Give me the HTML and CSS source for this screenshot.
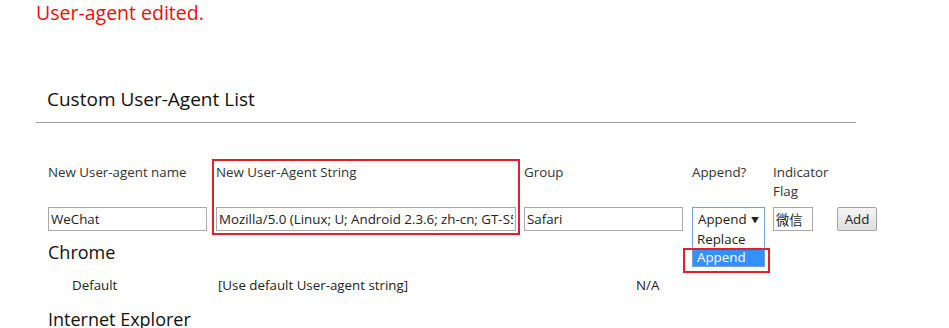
FILE: index.html
```html
<!DOCTYPE html>
<html lang="en">
<head>
  <meta charset="UTF-8">
  <title>User-Agent Switcher Options</title>
  <link rel="stylesheet" href="styles.css">
</head>
<body>
  <!-- status message -->
  <p class="notice">User-agent edited.</p>

  <div class="section">
    <h2 class="section-title">Custom User-Agent List</h2>

    <!-- add form -->
    <div class="add-form">
      <div class="col col-name">
        <label class="col-label">New User-agent name</label>
        <input class="field" type="text" value="WeChat">
      </div>
      <div class="col col-string marked">
        <label class="col-label">New User-Agent String</label>
        <input class="field" type="text" value="Mozilla/5.0 (Linux; U; Android 2.3.6; zh-cn; GT-S5660 Build/GINGERBREAD)">
      </div>
      <div class="col col-group">
        <label class="col-label">Group</label>
        <input class="field" type="text" value="Safari">
      </div>
      <div class="col col-append">
        <label class="col-label">Append?</label>
        <div class="select-box">
          <span>Append</span>
          <span class="arrow">&#9660;</span>
        </div>
        <ul class="dropdown">
          <li>Replace</li>
          <li class="selected">Append</li>
        </ul>
        <span class="callout"></span>
      </div>
      <div class="col col-flag">
        <label class="col-label">Indicator Flag</label>
        <input class="field" type="text" value="微信">
      </div>
      <div class="col col-add">
        <label class="col-label"></label>
        <button class="add-btn">Add</button>
      </div>
    </div>

    <!-- groups -->
    <h3 class="group-title">Chrome</h3>
    <div class="ua-row">
      <span>Default</span>
      <span>[Use default User-agent string]</span>
      <span>N/A</span>
    </div>

    <h3 class="group-title">Internet Explorer</h3>
  </div>
</body>
</html>
```

FILE: styles.css
```css
/* base */
body {
  margin: 0;
  font-family: "Open Sans", "Noto Sans CJK SC", sans-serif;
  font-size: 13.33px;
  color: #222;
  background: #fff;
  overflow: hidden;
}

.notice {
  margin: 0;
  padding-left: 36px;
  font-size: 19.5px;
  line-height: 26px;
  color: #f20d0d;
}

.section {
  padding-left: 36px;
}

.section-title {
  margin: 60px 0 0;
  width: 809px;
  padding: 0 0 9px 11px;
  font-size: 19px;
  font-weight: normal;
  line-height: 27px;
  color: #111;
  border-bottom: 1px solid #999;
}

/* add form */
.add-form {
  display: flex;
  gap: 8px;
  margin: 40px 0 0 12px;
}

.col {
  display: flex;
  flex-direction: column;
  position: relative;
}

.col-name { width: 160px; }
.col-string { width: 300px; }
.col-group { width: 160px; }
.col-append { width: 73px; }
.col-flag { width: 56px; }
.col-add { width: 40px; }

.col-label {
  display: block;
  height: 44px;
  line-height: 19px;
  color: #333;
}

.marked {
  outline: 2px solid #e41e2a;
  outline-offset: 2px;
}

.field {
  box-sizing: border-box;
  width: 100%;
  height: 24px;
  margin: 0;
  padding: 0 2px;
  border: 1px solid #a9a9a9;
  font-family: inherit;
  font-size: 13.33px;
  color: #222;
}

.col-name .field { width: 159px; }
.col-group .field { width: 159px; }
.col-flag .field { width: 40px; }

.select-box {
  box-sizing: border-box;
  height: 24px;
  display: flex;
  align-items: center;
  justify-content: space-between;
  padding: 0 5px 0 5px;
  border: 1px solid #7b9fd6;
  color: #222;
}

.select-box .arrow {
  font-size: 8px;
  color: #222;
}

.dropdown {
  position: absolute;
  left: 0;
  top: 67px;
  box-sizing: border-box;
  width: 73px;
  margin: 0;
  padding: 0;
  list-style: none;
  border: 1px solid #7b9fd6;
  border-top: none;
  background: #fff;
}

.dropdown li {
  height: 18px;
  line-height: 18px;
  padding-left: 4px;
  color: #222;
}

.dropdown li.selected {
  background: #3391ff;
  color: #fff;
}

.callout {
  position: absolute;
  left: -9px;
  top: 85px;
  box-sizing: border-box;
  width: 87px;
  height: 25px;
  border: 2px solid #e41e2a;
}

.add-btn {
  box-sizing: border-box;
  width: 40px;
  height: 24px;
  padding: 0;
  font-family: inherit;
  font-size: 13.33px;
  color: #222;
  border: 1px solid #a3a3a3;
  border-radius: 2px;
  background: linear-gradient(#f6f6f6, #dedede);
}

/* groups */
.group-title {
  margin: 9px 0 0 12px;
  font-size: 18px;
  font-weight: normal;
  line-height: 24px;
  color: #111;
}

.ua-row {
  display: grid;
  grid-template-columns: 146px 418px auto;
  margin: 12px 0 0 36px;
  line-height: 19px;
  color: #222;
}

.ua-row + .group-title {
  margin-top: 12px;
}
```
